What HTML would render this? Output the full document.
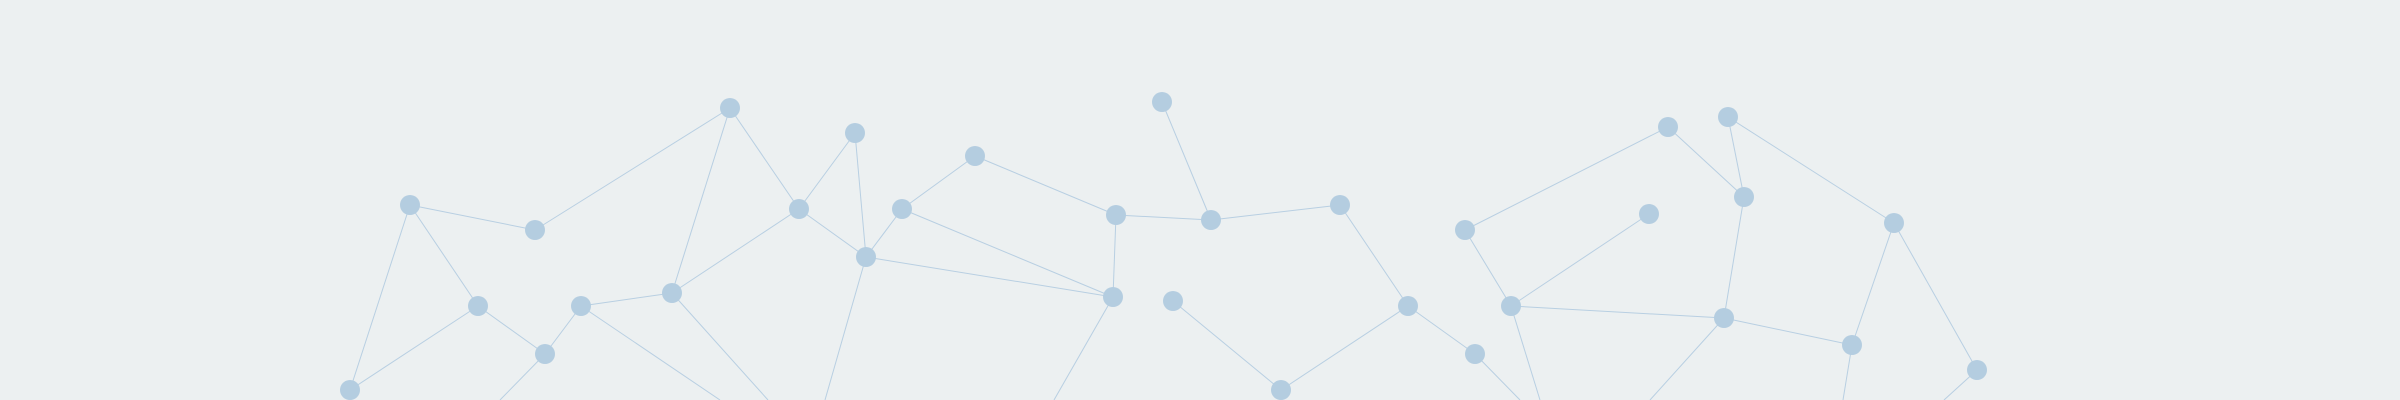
<!DOCTYPE html>
<html><head><meta charset="utf-8"><style>
html,body{margin:0;padding:0;background:#ecf0f1;}
svg{display:block}
</style></head><body>
<svg width="2400" height="400" viewBox="0 0 2400 400" xmlns="http://www.w3.org/2000/svg">
<rect width="2400" height="400" fill="#ecf0f1"/>
<g stroke="#b8cfe2" stroke-width="1" fill="none">
<line x1="410" y1="205" x2="350" y2="390"/>
<line x1="410" y1="205" x2="535" y2="230"/>
<line x1="410" y1="205" x2="478" y2="306"/>
<line x1="535" y1="230" x2="730" y2="108"/>
<line x1="730" y1="108" x2="672" y2="293"/>
<line x1="730" y1="108" x2="799" y2="209"/>
<line x1="799" y1="209" x2="855" y2="133"/>
<line x1="855" y1="133" x2="866" y2="257"/>
<line x1="799" y1="209" x2="866" y2="257"/>
<line x1="799" y1="209" x2="672" y2="293"/>
<line x1="902" y1="209" x2="975" y2="156"/>
<line x1="902" y1="209" x2="866" y2="257"/>
<line x1="902" y1="209" x2="1113" y2="297"/>
<line x1="866" y1="257" x2="1113" y2="297"/>
<line x1="478" y1="306" x2="350" y2="390"/>
<line x1="478" y1="306" x2="545" y2="354"/>
<line x1="581" y1="306" x2="672" y2="293"/>
<line x1="581" y1="306" x2="545" y2="354"/>
<line x1="581" y1="306" x2="720" y2="400"/>
<line x1="672" y1="293" x2="768" y2="400"/>
<line x1="866" y1="257" x2="825" y2="400"/>
<line x1="545" y1="354" x2="500" y2="400"/>
<line x1="975" y1="156" x2="1116" y2="215"/>
<line x1="1116" y1="215" x2="1211" y2="220"/>
<line x1="1162" y1="102" x2="1211" y2="220"/>
<line x1="1211" y1="220" x2="1340" y2="205"/>
<line x1="1116" y1="215" x2="1113" y2="297"/>
<line x1="1113" y1="297" x2="1054" y2="400"/>
<line x1="1173" y1="301" x2="1281" y2="390"/>
<line x1="1281" y1="390" x2="1408" y2="306"/>
<line x1="1340" y1="205" x2="1408" y2="306"/>
<line x1="1408" y1="306" x2="1475" y2="354"/>
<line x1="1475" y1="354" x2="1520" y2="400"/>
<line x1="1465" y1="230" x2="1668" y2="127"/>
<line x1="1465" y1="230" x2="1511" y2="306"/>
<line x1="1511" y1="306" x2="1649" y2="214"/>
<line x1="1511" y1="306" x2="1724" y2="318"/>
<line x1="1511" y1="306" x2="1540" y2="400"/>
<line x1="1724" y1="318" x2="1650" y2="400"/>
<line x1="1668" y1="127" x2="1744" y2="197"/>
<line x1="1728" y1="117" x2="1744" y2="197"/>
<line x1="1744" y1="197" x2="1724" y2="318"/>
<line x1="1728" y1="117" x2="1894" y2="223"/>
<line x1="1894" y1="223" x2="1852" y2="345"/>
<line x1="1894" y1="223" x2="1977" y2="370"/>
<line x1="1724" y1="318" x2="1852" y2="345"/>
<line x1="1852" y1="345" x2="1843" y2="400"/>
<line x1="1977" y1="370" x2="1944" y2="400"/>
</g>
<g fill="#b4cde0">
<circle cx="730" cy="108" r="10"/>
<circle cx="855" cy="133" r="10"/>
<circle cx="975" cy="156" r="10"/>
<circle cx="410" cy="205" r="10"/>
<circle cx="535" cy="230" r="10"/>
<circle cx="799" cy="209" r="10"/>
<circle cx="902" cy="209" r="10"/>
<circle cx="866" cy="257" r="10"/>
<circle cx="478" cy="306" r="10"/>
<circle cx="581" cy="306" r="10"/>
<circle cx="672" cy="293" r="10"/>
<circle cx="545" cy="354" r="10"/>
<circle cx="350" cy="390" r="10"/>
<circle cx="1162" cy="102" r="10"/>
<circle cx="1116" cy="215" r="10"/>
<circle cx="1211" cy="220" r="10"/>
<circle cx="1340" cy="205" r="10"/>
<circle cx="1113" cy="297" r="10"/>
<circle cx="1173" cy="301" r="10"/>
<circle cx="1408" cy="306" r="10"/>
<circle cx="1281" cy="390" r="10"/>
<circle cx="1475" cy="354" r="10"/>
<circle cx="1465" cy="230" r="10"/>
<circle cx="1649" cy="214" r="10"/>
<circle cx="1511" cy="306" r="10"/>
<circle cx="1668" cy="127" r="10"/>
<circle cx="1728" cy="117" r="10"/>
<circle cx="1744" cy="197" r="10"/>
<circle cx="1724" cy="318" r="10"/>
<circle cx="1894" cy="223" r="10"/>
<circle cx="1852" cy="345" r="10"/>
<circle cx="1977" cy="370" r="10"/>
</g>
</svg>
</body></html>
